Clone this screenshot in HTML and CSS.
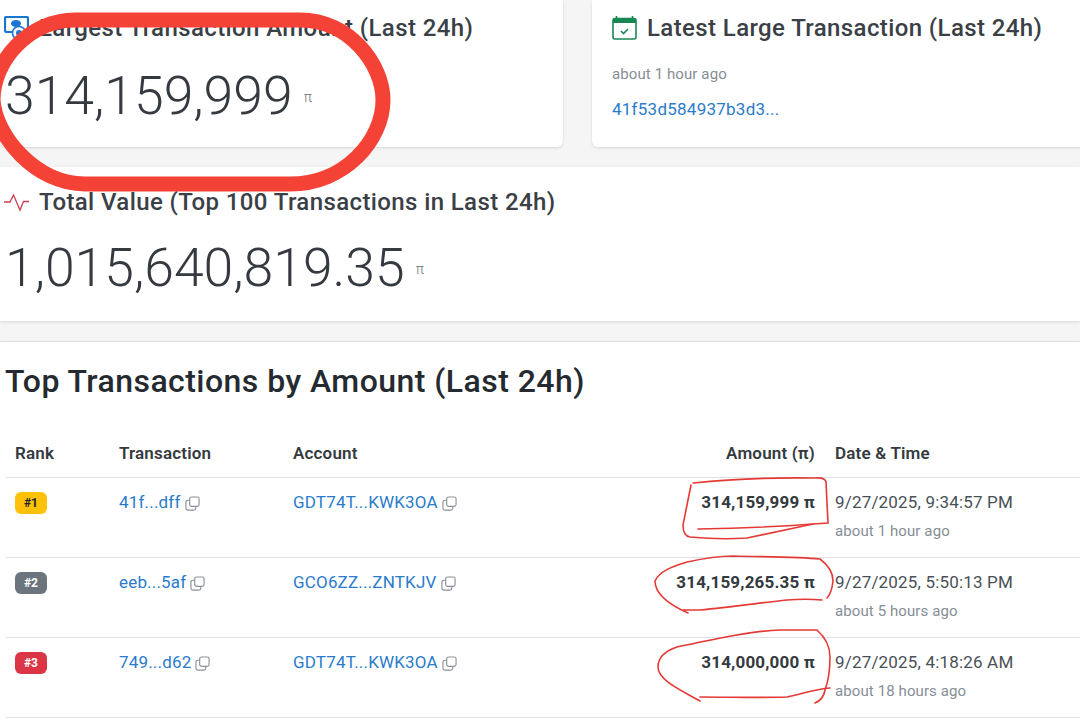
FILE: index.html
```html
<!DOCTYPE html>
<html lang="en">
<head>
<meta charset="utf-8">
<title>Top Transactions</title>
<link rel="stylesheet" href="styles.css">
</head>
<body>
<div class="page">
  <section class="stats-row">
    <div class="card stat-short">
      <h2 class="card-title">
        <svg class="title-icon" viewBox="0 0 25 24" fill="none"><rect x="1" y="1" width="23" height="15" rx="1.5" stroke="#1976d2" stroke-width="2.2"/><ellipse cx="12" cy="7.5" rx="5" ry="3.6" fill="#1976d2"/><circle cx="15" cy="17" r="6.5" fill="#fff" stroke="#1976d2" stroke-width="1.6"/><circle cx="15" cy="17" r="3" fill="#1976d2"/></svg>
        <span>Largest Transaction Amount (Last 24h)</span>
      </h2>
      <p class="big-value">314,159,999<span class="unit">π</span></p>
    </div>
    <div class="card stat-short stat-latest">
      <h2 class="card-title">
        <svg class="title-icon" viewBox="0 0 25 24" fill="none"><rect x="1" y="2.5" width="23" height="20.5" rx="2" stroke="#198754" stroke-width="1.6"/><path d="M1 3.5Q1 2 3 2H22Q24 2 24 3.5V7H1Z" fill="#198754"/><path d="M4.5 0v3M20.5 0v3" stroke="#198754" stroke-width="1.6"/><path d="M9 15l2.5 2.5L16 13" stroke="#198754" stroke-width="1.6"/></svg>
        <span>Latest Large Transaction (Last 24h)</span>
      </h2>
      <p class="muted latest-time">about 1 hour ago</p>
      <a class="link latest-link" href="#">41f53d584937b3d3...</a>
    </div>
  </section>

  <section class="card stat-total">
    <h2 class="card-title">
      <svg class="title-icon" viewBox="0 0 25 24" fill="none"><path d="M0 12H6L9.5 5L16 20L19.5 11.5H25" stroke="#c8414f" stroke-width="1.3"/></svg>
      <span>Total Value (Top 100 Transactions in Last 24h)</span>
    </h2>
    <p class="big-value">1,015,640,819.35<span class="unit">π</span></p>
  </section>

  <section class="card table-card">
    <h1 class="table-title">Top Transactions by Amount (Last 24h)</h1>
    <table class="tx-table">
      <thead>
        <tr>
          <th class="col-rank">Rank</th>
          <th class="col-tx">Transaction</th>
          <th class="col-account">Account</th>
          <th class="col-amount">Amount (π)</th>
          <th class="col-date">Date &amp; Time</th>
        </tr>
      </thead>
      <tbody>
        <tr>
          <td><span class="badge badge-gold">#1</span></td>
          <td><a class="link" href="#">41f...dff</a><svg class="copy" viewBox="0 0 16 16" fill="none"><rect x="5" y="1" width="10" height="10" rx="2"/><path d="M5 4.5H3A2 2 0 0 0 1 6.500V13A2 2 0 0 0 3 15H9.500A2 2 0 0 0 11.500 13V11"/></svg></td>
          <td><a class="link" href="#">GDT74T...KWK3OA</a><svg class="copy" viewBox="0 0 16 16" fill="none"><rect x="5" y="1" width="10" height="10" rx="2"/><path d="M5 4.5H3A2 2 0 0 0 1 6.500V13A2 2 0 0 0 3 15H9.500A2 2 0 0 0 11.500 13V11"/></svg></td>
          <td class="amount">314,159,999 π</td>
          <td><div class="date">9/27/2025, 9:34:57 PM</div><div class="muted ago">about 1 hour ago</div></td>
        </tr>
        <tr>
          <td><span class="badge badge-gray">#2</span></td>
          <td><a class="link" href="#">eeb...5af</a><svg class="copy" viewBox="0 0 16 16" fill="none"><rect x="5" y="1" width="10" height="10" rx="2"/><path d="M5 4.5H3A2 2 0 0 0 1 6.500V13A2 2 0 0 0 3 15H9.500A2 2 0 0 0 11.500 13V11"/></svg></td>
          <td><a class="link" href="#">GCO6ZZ...ZNTKJV</a><svg class="copy" viewBox="0 0 16 16" fill="none"><rect x="5" y="1" width="10" height="10" rx="2"/><path d="M5 4.5H3A2 2 0 0 0 1 6.500V13A2 2 0 0 0 3 15H9.500A2 2 0 0 0 11.500 13V11"/></svg></td>
          <td class="amount">314,159,265.35 π</td>
          <td><div class="date">9/27/2025, 5:50:13 PM</div><div class="muted ago">about 5 hours ago</div></td>
        </tr>
        <tr>
          <td><span class="badge badge-red">#3</span></td>
          <td><a class="link" href="#">749...d62</a><svg class="copy" viewBox="0 0 16 16" fill="none"><rect x="5" y="1" width="10" height="10" rx="2"/><path d="M5 4.5H3A2 2 0 0 0 1 6.500V13A2 2 0 0 0 3 15H9.500A2 2 0 0 0 11.500 13V11"/></svg></td>
          <td><a class="link" href="#">GDT74T...KWK3OA</a><svg class="copy" viewBox="0 0 16 16" fill="none"><rect x="5" y="1" width="10" height="10" rx="2"/><path d="M5 4.5H3A2 2 0 0 0 1 6.500V13A2 2 0 0 0 3 15H9.500A2 2 0 0 0 11.500 13V11"/></svg></td>
          <td class="amount">314,000,000 π</td>
          <td><div class="date">9/27/2025, 4:18:26 AM</div><div class="muted ago">about 18 hours ago</div></td>
        </tr>
      </tbody>
    </table>
  </section>

  <svg class="scribbles" viewBox="0 0 1080 725" fill="none" aria-hidden="true">
    <path class="scribble-big" d="M75 20L300 20C350 20 383 65 383 100C383 140 345 184 290 184L85 184C35 184 -5 135 -7 100C-7 60 30 20 75 20Z"/>
    <path class="scribble" d="M691 485L683 525Q683 536 690 537Q720 540 747 538L813 524L828 523L826 482Q825 477 815 478Q750 477 693 483"/>
    <path class="scribble" d="M698 529Q760 528 813 524"/>
    <path class="scribble" d="M688 613C670 605 655 595 655 581C660 570 675 566 687 562C710 557 720 556 733 556C770 557 800 557 820 559C828 565 833 572 833 581C832 590 830 595 827 598M822 600C810 599 800 599 787 600C760 603 730 607 700 610L683 610"/>
    <path class="scribble" d="M700 701C680 690 658 680 658 667C658 657 665 651 677 647C710 640 750 631 780 630L817 630C826 638 830 648 830 657C830 672 828 682 825 690C824 696 820 701 815 703"/>
    <path class="scribble" d="M830 688C815 689 805 693 787 697C760 698 730 697 700 697"/>
  </svg>
</div>
</body>
</html>
```

FILE: styles.css
```css
* { box-sizing: border-box; }

html, body {
  margin: 0;
  padding: 0;
}

body {
  font-family: Roboto, "Noto Sans", sans-serif;
  color: #212529;
  background: #f5f5f5;
}

.page {
  position: relative;
  width: 1080px;
  height: 725px;
  overflow: hidden;
  background: #f5f5f5;
  display: flex;
  flex-direction: column;
  gap: 20px;
}

.card {
  background: #fff;
  box-shadow: 0 1px 3px rgba(0, 0, 0, 0.12);
}

.stats-row {
  display: grid;
  grid-template-columns: 563px 520px;
  gap: 29px;
  height: 147px;
  flex: none;
}

.stat-short {
  border-radius: 0 0 6px 6px;
  padding: 14px 4px 0;
}

.stat-latest {
  padding-left: 20px;
}

.stat-total {
  height: 154px;
  flex: none;
  padding: 21px 4px 0;
}

.card-title {
  margin: 0;
  display: flex;
  align-items: center;
  gap: 10px;
  font-size: 24px;
  line-height: 28px;
  font-weight: 500;
  letter-spacing: 0.39px;
  color: #3a4046;
  white-space: nowrap;
}

.title-icon {
  width: 25px;
  height: 24px;
  flex: none;
}

.big-value {
  margin: 19px 0 0 1px;
  font-size: 53.5px;
  line-height: 66px;
  font-weight: 300;
  color: #343a40;
  white-space: nowrap;
}

.stat-short .big-value {
  margin-top: 21px;
}

.unit {
  margin-left: 11px;
  font-size: 14px;
  line-height: 0;
  color: #6c757d;
  vertical-align: 12px;
}

.muted {
  color: #868e96;
}

.latest-time {
  margin: 22px 0 0;
  font-size: 15px;
  line-height: 20px;
  letter-spacing: 0.1px;
}

.link {
  color: #2b7bcb;
  text-decoration: none;
}

.latest-link {
  display: block;
  margin-top: 15px;
  font-size: 17px;
  line-height: 20px;
  letter-spacing: 0.25px;
}

.table-card {
  flex: none;
  height: 400px;
  padding: 20px 0 0 5px;
  border-top: 1px solid #e0e0e0;
}

.table-title {
  margin: 0;
  font-size: 32px;
  line-height: 38px;
  font-weight: 500;
  letter-spacing: 0.45px;
  color: #252a30;
  white-space: nowrap;
}

.tx-table {
  margin: 33px 0 0 1px;
  width: 1074px;
  table-layout: fixed;
  border-collapse: collapse;
  font-size: 17px;
  letter-spacing: 0.18px;
}

.tx-table th {
  height: 44px;
  padding: 0 9px 4px;
  text-align: left;
  font-weight: 600;
  color: #343a40;
  border-bottom: 1px solid #dee2e6;
}

.tx-table td {
  height: 80px;
  padding: 9px 9px 0;
  vertical-align: top;
  border-bottom: 1px solid #dee2e6;
}

.col-rank { width: 104px; }
.col-tx { width: 174px; }
.col-account { width: 260px; }
.col-amount { width: 281px; text-align: right !important; padding-right: 10px !important; }
.col-date { padding-left: 10px !important; }

.amount {
  text-align: right;
  font-weight: 700;
  color: #343a40;
  padding-right: 10px !important;
  line-height: 30px;
}

.tx-table td .link {
  line-height: 30px;
}

.copy {
  width: 15px;
  height: 15px;
  margin-left: 4px;
  vertical-align: -3px;
  stroke: #8a9199;
  stroke-width: 1.2;
}

.badge {
  display: block;
  width: 32px;
  height: 22px;
  margin-top: 5px;
  border-radius: 6px;
  text-align: center;
  font-size: 12px;
  line-height: 22px;
  font-weight: 700;
  letter-spacing: 0;
  color: #fff;
}

.badge-gold { background: #ffc107; color: #212529; }
.badge-gray { background: #6c757d; }
.badge-red { background: #dc3545; }

.date {
  line-height: 30px;
  color: #495057;
  white-space: nowrap;
  margin-left: 1px;
}

.ago {
  font-size: 15px;
  line-height: 28px;
  letter-spacing: 0.1px;
  white-space: nowrap;
  margin-left: 1px;
}

.scribbles {
  position: absolute;
  left: 0;
  top: 0;
  width: 1080px;
  height: 725px;
  pointer-events: none;
}

.scribble-big {
  stroke: #f44336;
  stroke-width: 15;
}

.scribble {
  stroke: #e53935;
  stroke-width: 1.6;
  stroke-linecap: round;
}
```
